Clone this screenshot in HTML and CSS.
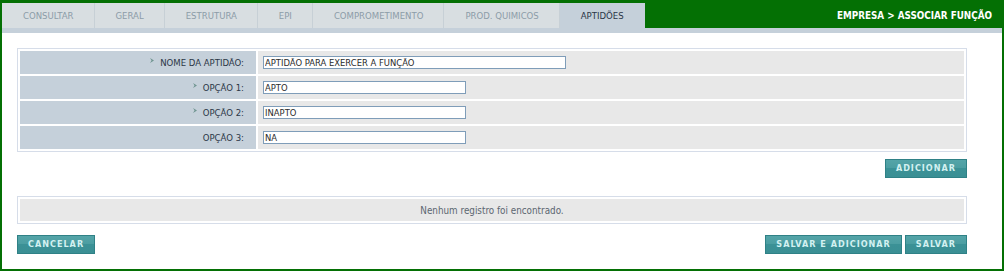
FILE: index.html
```html
<!DOCTYPE html>
<html lang="pt-BR">
<head>
<meta charset="utf-8">
<title>Empresa - Associar Função</title>
<link rel="stylesheet" href="styles.css">
</head>
<body>
<div class="frame">
  <div class="tabbar">
    <ul class="tabs">
      <li class="tab">CONSULTAR</li>
      <li class="tab">GERAL</li>
      <li class="tab">ESTRUTURA</li>
      <li class="tab">EPI</li>
      <li class="tab">COMPROMETIMENTO</li>
      <li class="tab">PROD. QUIMICOS</li>
      <li class="tab active">APTIDÕES</li>
    </ul>
    <div class="title">EMPRESA &gt; ASSOCIAR FUNÇÃO</div>
  </div>
  <div class="strip"></div>
  <div class="content">
    <table class="box form-box">
      <tr>
        <th class="label"><span class="req"><svg width="4" height="5" viewBox="0 0 4 5"><path d="M0 0l4 2.5-4 2.5 1.5-2.5z" fill="#6f9490"/></svg></span>NOME DA APTIDÃO:</th>
        <td class="value"><input class="field wide" type="text" value="APTIDÃO PARA EXERCER A FUNÇÃO"></td>
      </tr>
      <tr>
        <th class="label"><span class="req"><svg width="4" height="5" viewBox="0 0 4 5"><path d="M0 0l4 2.5-4 2.5 1.5-2.5z" fill="#6f9490"/></svg></span>OPÇÃO 1:</th>
        <td class="value"><input class="field" type="text" value="APTO"></td>
      </tr>
      <tr>
        <th class="label"><span class="req"><svg width="4" height="5" viewBox="0 0 4 5"><path d="M0 0l4 2.5-4 2.5 1.5-2.5z" fill="#6f9490"/></svg></span>OPÇÃO 2:</th>
        <td class="value"><input class="field" type="text" value="INAPTO"></td>
      </tr>
      <tr>
        <th class="label">OPÇÃO 3:</th>
        <td class="value"><input class="field" type="text" value="NA"></td>
      </tr>
    </table>
    <div class="row-right">
      <button class="btn" type="button">ADICIONAR</button>
    </div>
    <table class="box list-box">
      <tr><td class="empty">Nenhum registro foi encontrado.</td></tr>
    </table>
    <div class="footer">
      <button class="btn" type="button">CANCELAR</button>
      <div class="group">
        <button class="btn" type="button">SALVAR E ADICIONAR</button>
        <button class="btn" type="button">SALVAR</button>
      </div>
    </div>
  </div>
</div>
</body>
</html>
```
FILE: styles.css
```css
* { box-sizing: border-box; }
html, body { margin: 0; padding: 0; background: #ffffff; }
body {
  font-family: "DejaVu Sans Condensed", "DejaVu Sans", "Liberation Sans", sans-serif;
  font-stretch: condensed;
  font-size: 9.5px;
  color: #333;
}
.frame {
  width: 1004px;
  height: 271px;
  border-style: solid;
  border-color: #047004;
  border-width: 3px 2px 2px 2px;
  background: #ffffff;
  display: flex;
  flex-direction: column;
}
.tabbar {
  height: 25px;
  background: #047004;
  display: flex;
  align-items: stretch;
  justify-content: space-between;
}
.tabs {
  list-style: none;
  margin: 0;
  padding: 0;
  display: flex;
}
.tab {
  display: flex;
  align-items: center;
  padding: 0 20px 0 21px;
  background: #d8dee1;
  color: #8c9ca8;
  border-right: 1px solid #c7d0d6;
  font-size: 9.5px;
}
.tab.active {
  background: #c5d0da;
  color: #2a3646;
  border-right: 0;
  padding-right: 21px;
}
.title {
  display: flex;
  align-items: center;
  padding-right: 10px;
  color: #ffffff;
  font-weight: bold;
  font-size: 9.8px;
}
.strip {
  height: 5px;
  background: #c5d0da;
}
.content {
  width: 965px;
  padding: 15px 0 0 15px;
}
.box {
  width: 950px;
  border: 1px solid #d6dde9;
  border-collapse: separate;
  border-spacing: 2px;
}
.label {
  width: 236px;
  height: 23px;
  background: #c5d0da;
  color: #2b3746;
  font-weight: normal;
  text-align: right;
  padding: 0 12px 0 0;
  white-space: nowrap;
}
.req {
  display: inline-block;
  vertical-align: top;
  margin: 1px 6px 0 0;
  line-height: 0;
}
.value {
  background: #e8e8e8;
  padding: 0 0 0 5px;
  height: 23px;
}
.field {
  display: block;
  width: 203px;
  height: 13px;
  border: 1px solid #7f9db9;
  background: #ffffff;
  font-family: inherit;
  font-stretch: condensed;
  font-size: 9.4px;
  line-height: 11px;
  color: #2b2b2b;
  padding: 0 1px;
  margin: 0;
  outline: none;
}
.field.wide { width: 303px; }
.row-right {
  display: flex;
  justify-content: flex-end;
  width: 950px;
  margin-top: 7px;
}
.btn {
  height: 19px;
  padding: 0 10px;
  border: 1px solid #2f8186;
  background: linear-gradient(#54a4a8 0, #4c9ea2 45%, #3b9196 50%, #3a8f94 100%);
  color: #d3f1f1;
  font-family: "DejaVu Sans Condensed", "DejaVu Sans", sans-serif;
  font-stretch: condensed;
  font-weight: bold;
  font-size: 9px;
  letter-spacing: 1px;
  line-height: 17px;
  margin: 0;
  cursor: pointer;
}
.list-box { margin-top: 18px; }
.empty {
  height: 22px;
  background: #e8e8e8;
  color: #5b6670;
  text-align: center;
  padding: 0;
  font-size: 9.8px;
}
.footer {
  width: 950px;
  margin-top: 11px;
  display: flex;
  justify-content: space-between;
  align-items: flex-start;
}
.group {
  display: flex;
  gap: 3px;
}
```
